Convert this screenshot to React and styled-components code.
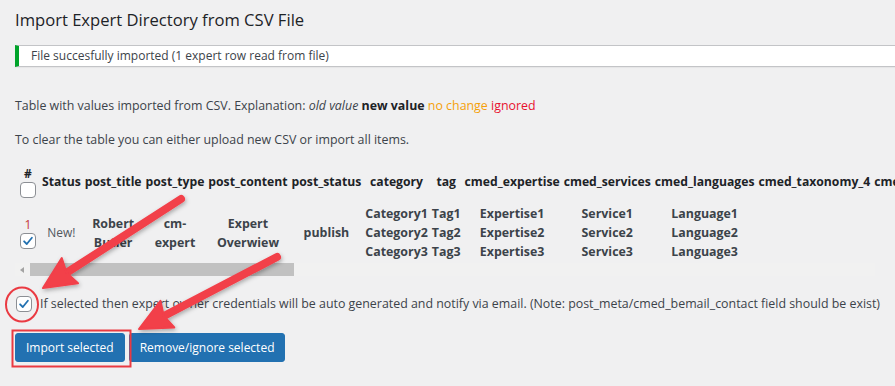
import styled, { createGlobalStyle } from "styled-components";

const GlobalStyle = createGlobalStyle`
  html, body {
    margin: 0;
    padding: 0;
    background: #f0f0f1;
  }
  body {
    font-family: "Open Sans", "Noto Sans", sans-serif;
    font-size: 12.4px;
    color: #3c434a;
  }
`;

const Page = styled.div`
  position: relative;
  width: 895px;
  height: 386px;
  overflow: hidden;
  padding: 0 0 0 15px;
  box-sizing: border-box;
`;

const Title = styled.h1`
  margin: 0;
  padding: 8px 0 0;
  font-size: 16.6px;
  font-weight: 400;
  color: #1d2327;
  line-height: 24px;
`;

const Notice = styled.div`
  margin: 13px 0 0;
  background: #fff;
  border: 1px solid #c3c4c7;
  border-left: 4px solid #00a32a;
  border-right: none;
  box-shadow: 0 1px 1px rgba(0, 0, 0, 0.04);
  padding: 0 12px;
  font-size: 12px;
  line-height: 20px;
`;

const Para = styled.p`
  margin: ${(p) => p.$top}px 0 0;
  line-height: 18px;
`;

const Old = styled.i``;
const New = styled.b`
  color: #1d2327;
`;
const Same = styled.span`
  color: #f5a00a;
`;
const Ignored = styled.span`
  color: #e8102e;
`;

const TableWrap = styled.div`
  margin-top: 17px;
  overflow: hidden;
  width: 880px;
`;

const Table = styled.table`
  border-collapse: collapse;
  white-space: nowrap;
`;

const Th = styled.th`
  padding: 0 2px;
  font-size: 12.2px;
  font-weight: 700;
  color: #1d2327;
  text-align: center;
  vertical-align: middle;
  line-height: 18px;
`;

const Td = styled.td`
  padding: 6px 2px 0;
  font-size: ${(p) => (p.$plain ? 12 : 12.4)}px;
  font-weight: ${(p) => (p.$plain ? 400 : 700)};
  color: ${(p) => (p.$plain ? "#50575e" : "#3c434a")};
  text-align: center;
  vertical-align: middle;
  line-height: 19px;
`;

const NumCell = styled.div`
  display: flex;
  flex-direction: column;
  align-items: center;
  padding: 0 2px 0 3px;
  font-size: 12px;
  font-weight: ${(p) => (p.$bold ? 700 : 400)};
  color: ${(p) => (p.$bold ? "#1d2327" : "#c63a3a")};
  line-height: 16px;
`;

const Box = styled.span`
  display: inline-flex;
  align-items: center;
  justify-content: center;
  width: 14px;
  height: 14px;
  border: 1px solid #8c8f94;
  border-radius: 4px;
  background: #fff;
  flex-shrink: 0;
`;

const Check = ({ on }) => (
  <Box>
    {on && (
      <svg width="12" height="12" viewBox="0 0 20 20">
        <path d="M3.5 10.5 L8 15 L16.5 4.5" fill="none" stroke="#2271b1" strokeWidth="3" strokeLinecap="round" strokeLinejoin="round" />
      </svg>
    )}
  </Box>
);

const Scrollbar = styled.div`
  display: flex;
  align-items: center;
  margin-top: 2px;
  width: 860px;
  height: 13px;
  background: #f1f1f1;
`;

const ScrollArrow = styled.span`
  width: 0;
  height: 0;
  margin: 0 6px 0 5px;
  border-top: 3.5px solid transparent;
  border-bottom: 3.5px solid transparent;
  border-right: 4px solid #a3a3a3;
`;

const Thumb = styled.div`
  width: 264px;
  height: 13px;
  background: #c1c1c1;
`;

const OptionRow = styled.label`
  display: flex;
  align-items: center;
  gap: 8px;
  margin: 19px 0 0 1px;
  line-height: 18px;
  white-space: nowrap;
`;

const Actions = styled.div`
  display: flex;
  gap: 4px;
  margin-top: 20px;
`;

const Button = styled.button`
  box-sizing: border-box;
  height: 29px;
  padding: 0 10px;
  border: 1px solid #2271b1;
  border-radius: 3px;
  background: #2271b1;
  color: #fff;
  font-family: inherit;
  font-size: 12px;
  line-height: 27px;
  white-space: nowrap;
`;

const Overlay = styled.svg`
  position: absolute;
  left: 0;
  top: 0;
  pointer-events: none;
`;

const headers = [
  "Status",
  "post_title",
  "post_type",
  "post_content",
  "post_status",
  "category",
  "tag",
  "cmed_expertise",
  "cmed_services",
  "cmed_languages",
  "cmed_taxonomy_4",
  "cmed_taxonomy_5",
];

const multi = (list) =>
  list.map((v, i) => (
    <span key={i}>
      {v}
      {i < list.length - 1 && <br />}
    </span>
  ));

const Arrow = ({ tail, tip }) => {
  const dx = tip[0] - tail[0];
  const dy = tip[1] - tail[1];
  const len = Math.hypot(dx, dy);
  const ux = dx / len;
  const uy = dy / len;
  const bx = tip[0] - ux * 32;
  const by = tip[1] - uy * 32;
  const nx = -uy;
  const ny = ux;
  const pts = [
    tip,
    [bx + nx * 15, by + ny * 15],
    [bx + ux * 4, by + uy * 4],
    [bx - nx * 15, by - ny * 15],
  ]
    .map((p) => p.join(","))
    .join(" ");
  return (
    <g filter="url(#sh)">
      <line x1={tail[0]} y1={tail[1]} x2={bx + ux * 6} y2={by + uy * 6} stroke="#f23f49" strokeWidth="8" strokeLinecap="round" />
      <polygon points={pts} fill="#f23f49" strokeLinejoin="round" stroke="#f23f49" strokeWidth="2" />
    </g>
  );
};

export default function App() {
  return (
    <Page>
      <GlobalStyle />
      <Title>Import Expert Directory from CSV File</Title>
      <Notice>File succesfully imported (1 expert row read from file)</Notice>
      <Para $top={30}>
        Table with values imported from CSV. Explanation: <Old>old value</Old> <New>new value</New>{" "}
        <Same>no change</Same> <Ignored>ignored</Ignored>
      </Para>
      <Para $top={16}>To clear the table you can either upload new CSV or import all items.</Para>
      <TableWrap>
        <Table>
          <thead>
            <tr>
              <Th>
                <NumCell $bold>
                  #
                  <Check />
                </NumCell>
              </Th>
              {headers.map((h) => (
                <Th key={h}>{h}</Th>
              ))}
            </tr>
          </thead>
          <tbody>
            <tr>
              <Td $plain>
                <NumCell>
                  1
                  <Check on />
                </NumCell>
              </Td>
              <Td $plain>New!</Td>
              <Td>{multi(["Robert", "Butler"])}</Td>
              <Td>{multi(["cm-", "expert"])}</Td>
              <Td>{multi(["Expert", "Overwiew"])}</Td>
              <Td>publish</Td>
              <Td>{multi(["Category1", "Category2", "Category3"])}</Td>
              <Td>{multi(["Tag1", "Tag2", "Tag3"])}</Td>
              <Td>{multi(["Expertise1", "Expertise2", "Expertise3"])}</Td>
              <Td>{multi(["Service1", "Service2", "Service3"])}</Td>
              <Td>{multi(["Language1", "Language2", "Language3"])}</Td>
              <Td />
              <Td />
            </tr>
          </tbody>
        </Table>
      </TableWrap>
      <Scrollbar>
        <ScrollArrow />
        <Thumb />
      </Scrollbar>
      <OptionRow>
        <Check on />
        If selected then expert owner credentials will be auto generated and notify via email. (Note: post_meta/cmed_bemail_contact field should be exist)
      </OptionRow>
      <Actions>
        <Button>Import selected</Button>
        <Button>Remove/ignore selected</Button>
      </Actions>
      <Overlay width="895" height="386" viewBox="0 0 895 386">
        <defs>
          <filter id="sh" x="-20%" y="-20%" width="140%" height="140%">
            <feDropShadow dx="1" dy="2" stdDeviation="2" floodColor="#000" floodOpacity="0.3" />
          </filter>
        </defs>
        <Arrow tail={[181, 199]} tip={[43, 288]} />
        <Arrow tail={[277, 257]} tip={[139, 329]} />
        <ellipse cx="22" cy="304.5" rx="16" ry="17" fill="none" stroke="#ea3a42" strokeWidth="2" />
        <rect x="12.5" y="330.5" width="118" height="36" fill="none" stroke="#ea3a42" strokeWidth="2" />
      </Overlay>
    </Page>
  );
}
